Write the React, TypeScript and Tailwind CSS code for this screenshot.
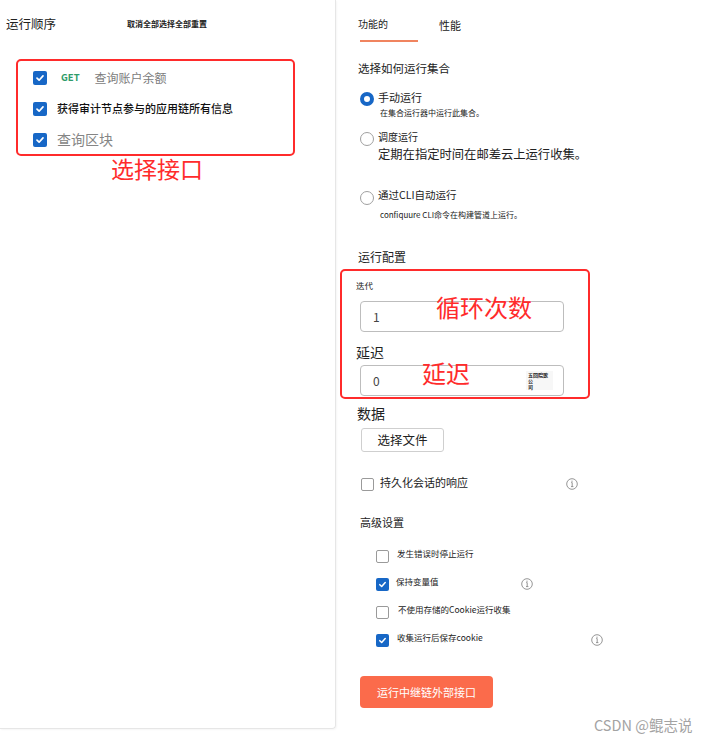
import React from "react";

const Check = ({ checked, size = 14 }: { checked: boolean; size?: number }) => (
  <div
    className={
      checked
        ? "flex shrink-0 items-center justify-center rounded-[2px] bg-[#1767c6]"
        : "shrink-0 rounded-[2px] border border-[#9a9a9a] bg-white"
    }
    style={{ width: size, height: size }}
  >
    {checked && (
      <svg width={size - 4} height={size - 4} viewBox="0 0 10 10" fill="none">
        <path d="M2 5.2 L4.1 7.2 L8 2.9" stroke="white" strokeWidth="1.7" strokeLinecap="round" strokeLinejoin="round" />
      </svg>
    )}
  </div>
);

const Radio = ({ on }: { on: boolean }) => (
  <div
    className={
      on
        ? "h-[14px] w-[14px] shrink-0 rounded-full border-[4px] border-[#1767c6] bg-white"
        : "h-[14px] w-[14px] shrink-0 rounded-full border border-[#a0a0a0] bg-white"
    }
  />
);

const Info = () => (
  <svg width="12" height="12" viewBox="0 0 12 12" fill="none" className="shrink-0">
    <circle cx="6" cy="6" r="5.3" stroke="#8a8a8a" strokeWidth="0.9" />
    <path d="M5.2 4.6 H6.2 V8.6 M5 8.6 H7.4" stroke="#8a8a8a" strokeWidth="0.9" />
    <circle cx="6" cy="3.2" r="0.6" fill="#8a8a8a" />
  </svg>
);

export default function App() {
  return (
    <div className="relative flex h-[742px] w-[708px] overflow-hidden bg-white font-['Noto_Sans_CJK_SC',sans-serif] text-[#222]">
      {/* Left panel */}
      <div className="h-[729px] w-[336px] shrink-0 rounded-br-[4px] border-r border-b border-[#e6e6e6] shadow-[1px_1px_2px_rgba(0,0,0,0.04)]">
        <div className="flex h-[47px] items-center pl-[6px]">
          <span className="text-[12.5px] leading-[16px] text-[#222]">运行顺序</span>
          <span className="ml-[71px] text-[8px] font-bold leading-[10px] text-[#222]">取消全部选择全部重置</span>
        </div>
        <div className="ml-[16px] mt-[12px] h-[97px] w-[279px] rounded-[5px] border-2 border-[#ff2b2b] pl-[15px] pt-[1px]">
          <div className="flex h-[31px] items-center">
            <Check checked />
            <span className="ml-[14px] text-[9.5px] font-bold text-[#2f9c6a]">GET</span>
            <span className="ml-[15px] text-[12px] text-[#7c7c7c]">查询账户余额</span>
          </div>
          <div className="flex h-[31px] items-center">
            <Check checked />
            <span className="ml-[10px] text-[11px] font-medium text-[#111]">获得审计节点参与的应用链所有信息</span>
          </div>
          <div className="flex h-[31px] items-center">
            <Check checked />
            <span className="ml-[10px] text-[14px] text-[#858585]">查询区块</span>
          </div>
        </div>
        <div className="ml-[111px] mt-[-1px] text-[23px] leading-[26px] text-[#ff2b2b]">选择接口</div>
      </div>

      {/* Right panel */}
      <div className="flex flex-col pl-[22px]">
        <div className="flex h-[42px] items-start">
          <div className="relative h-full w-[60px] pt-[17px] text-[10px] leading-[14px] text-[#222]">
            功能的
            <div className="absolute bottom-0 left-[2px] h-[2px] w-[58px] bg-[#f0845f]" />
          </div>
          <div className="ml-[21px] pt-[18px] text-[11px] leading-[14px] text-[#222]">性能</div>
        </div>

        <div className="mt-[18px] text-[11.5px] leading-[16px]">选择如何运行集合</div>

        {/* Option 1 */}
        <div className="mt-[14px] flex pl-[2px]">
          <div className="mt-[2px]"><Radio on /></div>
          <div className="ml-[4px] flex flex-col">
            <span className="text-[11px] leading-[14px]">手动运行</span>
            <span className="ml-[2px] mt-[4px] text-[8px] leading-[10px]">在集合运行器中运行此集合。</span>
          </div>
        </div>
        {/* Option 2 */}
        <div className="mt-[12px] flex pl-[2px]">
          <div className="mt-[2px]"><Radio on={false} /></div>
          <div className="ml-[4px] flex flex-col">
            <span className="text-[10px] leading-[14px]">调度运行</span>
            <span className="mt-[2px] text-[12.3px] leading-[16px]">定期在指定时间在邮差云上运行收集。</span>
          </div>
        </div>
        {/* Option 3 */}
        <div className="mt-[26px] flex pl-[2px]">
          <div className="mt-[3px]"><Radio on={false} /></div>
          <div className="ml-[4px] flex flex-col">
            <span className="text-[10.5px] leading-[14px]">通过CLI自动运行</span>
            <span className="ml-[2px] mt-[8px] text-[8px] leading-[10px]">confiquure CLI命令在构建管道上运行。</span>
          </div>
        </div>

        <div className="mt-[29px] text-[12px] leading-[16px]">运行配置</div>

        {/* Red box */}
        <div className="relative ml-[-18px] mt-[4px] h-[130px] w-[250px] rounded-[5px] border-2 border-[#ff2b2b]">
          <div className="ml-[14px] mt-[9px] text-[8.5px] leading-[10px]">迭代</div>
          <div className="ml-[18px] mt-[11px] flex h-[31px] w-[204px] items-center rounded-[4px] border border-[#bdbdbd] pl-[12px] text-[12px] text-[#444]">
            1
          </div>
          <div className="ml-[14px] mt-[11px] text-[14px] leading-[18px]">延迟</div>
          <div className="ml-[18px] mt-[4px] flex h-[31px] w-[204px] items-center justify-between rounded-[4px] border border-[#bdbdbd] pl-[12px] pr-[10px] text-[12px] text-[#444]">
            <span>0</span>
            <div className="flex h-[19px] w-[27px] flex-col justify-center bg-[#f7f7f7] px-[2px] text-[5px] font-bold leading-[6px] text-[#222]">
              <span>五回院歌公</span>
              <span>司</span>
            </div>
          </div>
          <div className="absolute left-[94px] top-[22px] text-[24px] leading-[28px] text-[#ff2b2b]">循环次数</div>
          <div className="absolute left-[80px] top-[88px] text-[24px] leading-[28px] text-[#ff2b2b]">延迟</div>
        </div>

        <div className="mt-[5px] ml-[-1px] text-[14px] leading-[18px]">数据</div>
        <div className="ml-[3px] mt-[6px] flex h-[24px] w-[83px] items-center justify-center rounded-[3px] border border-[#cfcfcf] text-[12.5px]">
          选择文件
        </div>

        <div className="ml-[3px] mt-[24px] flex h-[16px] w-[217px] items-center">
          <Check checked={false} size={13} />
          <span className="relative -top-[2px] ml-[6px] text-[11px]">持久化会话的响应</span>
          <div className="ml-auto"><Info /></div>
        </div>

        <div className="ml-[2px] mt-[23px] text-[11px] leading-[14px]">高级设置</div>

        <div className="ml-[18px] mt-[13px] flex flex-col">
          <div className="flex h-[28px] items-center">
            <Check checked={false} size={13} />
            <span className="relative -top-[3px] ml-[8px] text-[8.5px]">发生错误时停止运行</span>
          </div>
          <div className="flex h-[28px] w-[157px] items-center">
            <Check checked size={13} />
            <span className="relative -top-[3px] ml-[7px] text-[8.5px]">保持变量值</span>
            <div className="ml-auto"><Info /></div>
          </div>
          <div className="flex h-[28px] items-center">
            <Check checked={false} size={13} />
            <span className="relative -top-[3px] ml-[9px] text-[8.5px]">不使用存储的Cookie运行收集</span>
          </div>
          <div className="flex h-[28px] w-[227px] items-center">
            <Check checked size={13} />
            <span className="relative -top-[3px] ml-[8px] text-[8.5px]">收集运行后保存cookie</span>
            <div className="ml-auto"><Info /></div>
          </div>
        </div>

        <div className="ml-[2px] mt-[22px] flex h-[32px] w-[133px] items-center justify-center rounded-[4px] bg-[#fb6b4b] text-[11px] text-white">
          运行中继链外部接口
        </div>
      </div>

      <div className="absolute left-[594px] top-[716px] text-[14.5px] leading-[18px] text-[#a3a3a3]">CSDN @鲲志说</div>
    </div>
  );
}
